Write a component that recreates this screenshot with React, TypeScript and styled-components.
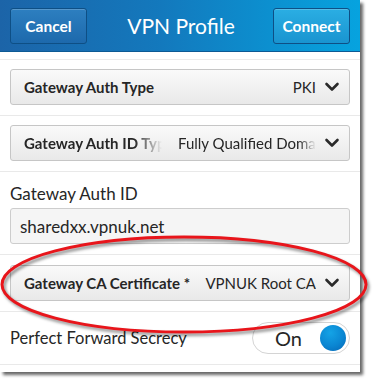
import React from "react";
import styled, { createGlobalStyle } from "styled-components";

const Global = createGlobalStyle`
  html, body { margin: 0; padding: 0; background: #ffffff; }
  body { font-family: Lato, "Open Sans", "Liberation Sans", sans-serif; }
  * { box-sizing: border-box; }
`;

const Page = styled.div`
  position: relative;
  width: 374px;
  height: 381px;
  overflow: hidden;
  background: #fff;
`;

const Screen = styled.div`
  width: 360px;
  height: 372px;
  background: #fff;
  box-shadow: 3px 3px 3px rgba(0, 0, 0, 0.6);
  display: flex;
  flex-direction: column;
  overflow: hidden;
`;

const Header = styled.div`
  height: 52px;
  flex: none;
  display: flex;
  align-items: center;
  justify-content: space-between;
  padding: 0 10px;
  background: linear-gradient(to right, #1c64a8 0%, #1379bd 45%, #06a3df 100%);
  border-bottom: 1px solid #0d5a94;
`;

const HeaderButton = styled.div<{ light?: boolean }>`
  width: 77px;
  height: 36px;
  border-radius: 3px;
  border: 1px solid #0e4f85;
  background: ${(p) =>
    p.light
      ? "linear-gradient(#2aaee3, #1994d0)"
      : "linear-gradient(#2d7fc0, #1d69ac)"};
  box-shadow: inset 0 1px 0 rgba(255, 255, 255, 0.2);
  color: #fff;
  font-size: 15.5px;
  font-weight: 700;
  display: flex;
  align-items: center;
  justify-content: center;
`;

const Title = styled.div`
  color: #fff;
  font-size: 21px;
  font-weight: 400;
  margin-left: 2px;
`;

const Spacer = styled.div`
  height: 8px;
  flex: none;
  border-bottom: 1px solid #ececec;
`;

const Row = styled.div<{ pt?: number; pb?: number }>`
  padding: ${(p) => p.pt ?? 9}px 10px ${(p) => p.pb ?? 10}px;
  border-bottom: 1px solid #e9e9e9;
  display: flex;
  flex-direction: column;
  flex: none;
`;

const Dropdown = styled.div`
  height: 36px;
  border: 1px solid #c6c6c6;
  border-radius: 3px;
  background: linear-gradient(#fafafa, #e9e9e9);
  display: flex;
  align-items: center;
  padding: 0 9px 0 13px;
  gap: 8px;
  color: #262626;
`;

const DropLabel = styled.div<{ fade?: boolean }>`
  font-size: 15px;
  font-weight: 700;
  white-space: nowrap;
  overflow: hidden;
  flex: ${(p) => (p.fade ? "0 0 138px" : "0 0 auto")};
  ${(p) =>
    p.fade
      ? "-webkit-mask-image: linear-gradient(to right, #000 80%, transparent 100%); mask-image: linear-gradient(to right, #000 80%, transparent 100%);"
      : ""}
`;

const DropValue = styled.div<{ fade?: boolean }>`
  font-size: 15px;
  font-weight: 400;
  white-space: nowrap;
  overflow: hidden;
  text-align: right;
  flex: ${(p) => (p.fade ? "1 1 auto" : "0 0 auto")};
  margin-left: auto;
  ${(p) =>
    p.fade
      ? "text-align: left; padding-left: 8px; -webkit-mask-image: linear-gradient(to right, #000 88%, transparent 100%); mask-image: linear-gradient(to right, #000 88%, transparent 100%);"
      : ""}
`;

const Chevron = () => (
  <svg width="16" height="12" viewBox="0 0 16 12" style={{ flex: "none" }}>
    <polyline
      points="2.5,3 8,8.5 13.5,3"
      fill="none"
      stroke="#2a2a2a"
      strokeWidth="2.6"
      strokeLinecap="round"
      strokeLinejoin="round"
    />
  </svg>
);

const FieldLabel = styled.div`
  font-size: 17px;
  color: #262626;
  height: 26px;
  line-height: 24px;
`;

const Input = styled.div`
  height: 36px;
  border: 1px solid #cdcdcd;
  border-radius: 3px;
  background: #f5f5f5;
  display: flex;
  align-items: center;
  padding: 0 9px;
  font-size: 17px;
  color: #262626;
`;

const ToggleRow = styled.div`
  display: flex;
  align-items: center;
  justify-content: space-between;
  font-size: 16.5px;
  color: #262626;
`;

const Toggle = styled.div`
  width: 98px;
  height: 32px;
  border: 1px solid #d4d4d4;
  border-radius: 16px;
  background: #fff;
  display: flex;
  align-items: center;
  justify-content: space-between;
  padding: 0 3px 0 22px;
  font-size: 20px;
  color: #262626;
`;

const Knob = styled.div`
  width: 26px;
  height: 26px;
  border-radius: 50%;
  background: radial-gradient(circle at 40% 30%, #14a3e6 0%, #0a86d2 55%, #0565b4 100%);
`;

const Overlay = styled.svg`
  position: absolute;
  left: 0;
  top: 0;
  pointer-events: none;
`;

export default function App() {
  return (
    <Page>
      <Global />
      <Screen>
        <Header>
          <HeaderButton>Cancel</HeaderButton>
          <Title>VPN Profile</Title>
          <HeaderButton light>Connect</HeaderButton>
        </Header>
        <Spacer />
        <Row>
          <Dropdown>
            <DropLabel>Gateway Auth Type</DropLabel>
            <DropValue>PKI</DropValue>
            <Chevron />
          </Dropdown>
        </Row>
        <Row>
          <Dropdown>
            <DropLabel fade>Gateway Auth ID Type</DropLabel>
            <DropValue fade>Fully Qualified Domain Name</DropValue>
            <Chevron />
          </Dropdown>
        </Row>
        <Row pt={10} pb={10}>
          <FieldLabel>Gateway Auth ID</FieldLabel>
          <Input>sharedxx.vpnuk.net</Input>
        </Row>
        <Row pt={10}>
          <Dropdown>
            <DropLabel>Gateway CA Certificate *</DropLabel>
            <DropValue>VPNUK Root CA</DropValue>
            <Chevron />
          </Dropdown>
        </Row>
        <Row pt={10} pb={10}>
          <ToggleRow>
            <span>Perfect Forward Secrecy</span>
            <Toggle>
              <span>On</span>
              <Knob />
            </Toggle>
          </ToggleRow>
        </Row>
      </Screen>
      <Overlay width="374" height="381" viewBox="0 0 374 381">
        <defs>
          <filter id="sh" x="-10%" y="-30%" width="120%" height="160%">
            <feGaussianBlur stdDeviation="1.5" />
          </filter>
        </defs>
        <ellipse cx="186" cy="287" rx="182" ry="47.5" fill="none" stroke="rgba(0,0,0,0.45)" strokeWidth="3" filter="url(#sh)" />
        <ellipse cx="184" cy="284.5" rx="182" ry="47.5" fill="none" stroke="#e8151b" strokeWidth="3" />
      </Overlay>
    </Page>
  );
}
